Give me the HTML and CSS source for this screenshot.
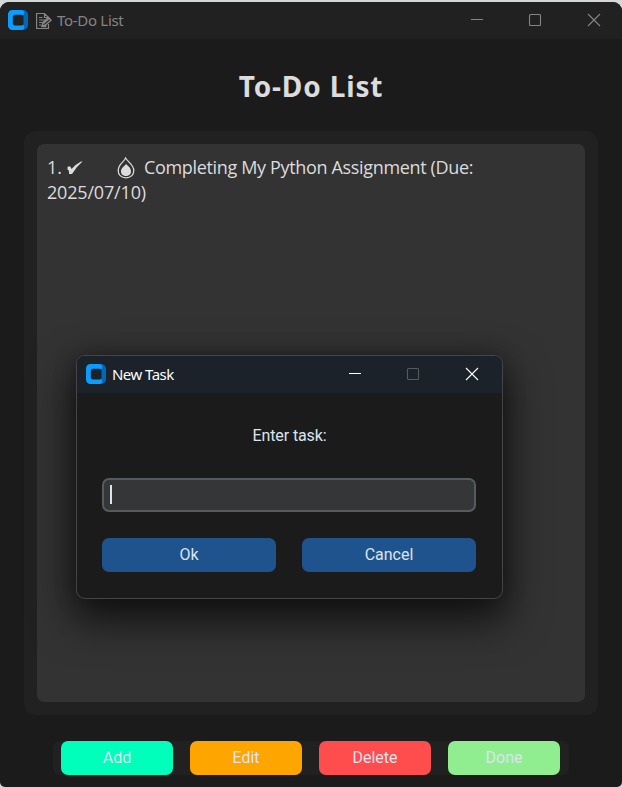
FILE: index.html
```html
<!DOCTYPE html>
<html lang="en">
<head>
<meta charset="utf-8">
<title>To-Do List</title>
<link rel="stylesheet" href="styles.css">
</head>
<body>
<main class="window">
  <header class="titlebar">
    <svg class="logo" viewBox="0 0 20 20"><rect width="20" height="20" rx="5" fill="#0067bd"/><path d="M5 0H14Q17 1 16 4L15 5V15L16 16Q17 19 14 20H5Q0 20 0 15V5Q0 0 5 0Z" fill="#0b9cff"/><rect class="logo-hole" x="4.800" y="4.800" width="10.700" height="10.700" rx="2"/></svg>
    <svg class="memo" viewBox="0 0 16 18" fill="none" stroke="#858585" stroke-width="1.2"><path d="M12.500 12V16.500H.6V1.500H8.500L12.500 5.500M8.500 1.500V5.500H12.500M3 5.500H6.500M3 8H9M3 10.500H6.500M3 13H5"/><path d="M6 14L7 10.500L12.500 5.500L15 8.200L9.500 13ZM7.500 11.500L13 6.800M5.500 14.500H10.500" stroke-width="1.400"/></svg>
    <span class="caption">To-Do List</span>
    <div class="controls">
      <svg viewBox="0 0 12 12"><path d="M0 5.500H12"/></svg>
      <svg viewBox="0 0 12 12"><rect x=".5" y=".5" width="11" height="11" rx="1"/></svg>
      <svg viewBox="0 0 12 12"><path d="M0 0L12 12M12 0L0 12"/></svg>
    </div>
  </header>
  <h1 class="heading">To-Do List</h1>
  <section class="panel">
    <div class="tasks">
      <div class="line"><span class="number">1.</span><svg class="check" viewBox="0 0 16 14"><path d="M.5 6Q3.500 4 4.500 8Q9 3 14 .5H15.500Q9 6 5 13H2Q2.500 9 .5 8.500Z" fill="#dcdcdc"/></svg><svg class="fire" viewBox="0 0 18 22"><path d="M8.500 1C8 4.500 1.200 6.500 1.200 13.500C1.200 18 4.500 20.800 9 20.800S16.800 18 16.800 13.500C16.800 8 11.500 5.500 8.500 1Z" fill="none" stroke="#d7d9dc" stroke-width="1.300"/><path d="M9 7C8.500 8.500 4 10.500 4 14.500C4 17.500 6.500 19 9 19S14 17.500 14 14.500C14 10.800 11 9 9 7Z" fill="#dcdcdc"/></svg><span class="text">Completing My Python Assignment (Due:</span></div>
      <div class="line"><span class="date">2025/07/10)</span></div>
    </div>
  </section>
  <nav class="actions">
    <button class="action add">Add</button>
    <button class="action edit">Edit</button>
    <button class="action delete">Delete</button>
    <button class="action done">Done</button>
  </nav>
</main>
<section class="dialog">
  <header class="titlebar dialog-bar">
    <svg class="logo" viewBox="0 0 20 20"><rect width="20" height="20" rx="5" fill="#0067bd"/><path d="M5 0H14Q17 1 16 4L15 5V15L16 16Q17 19 14 20H5Q0 20 0 15V5Q0 0 5 0Z" fill="#0b9cff"/><rect class="logo-hole" x="4.800" y="4.800" width="10.700" height="10.700" rx="2"/></svg>
    <span class="caption">New Task</span>
    <div class="controls">
      <svg viewBox="0 0 12 12"><path d="M0 5.500H12"/></svg>
      <svg class="disabled" viewBox="0 0 12 12"><rect x=".5" y=".5" width="11" height="11" rx="1"/></svg>
      <svg viewBox="0 0 12 12"><path d="M0 0L12 12M12 0L0 12"/></svg>
    </div>
  </header>
  <div class="prompt">Enter task:</div>
  <div class="entry"><span class="caret"></span></div>
  <div class="choices"><button class="choice">Ok</button><button class="choice">Cancel</button></div>
</section>
</body>
</html>
```
FILE: styles.css
```css
* { box-sizing: border-box; }
body { margin: 0; height: 787px; padding-top: 2px; background: #d5d8d8; overflow: hidden; position: relative; }
svg { display: block; flex: none; }
button { border: 0; padding: 0; border-radius: 7px; height: 34px; font: 16px/34px Roboto, sans-serif; color: #dce4ee; }
.window { height: 785px; border-radius: 9px 9px 5px 5px; background: #1b1b1b; overflow: hidden; }
.titlebar { display: flex; align-items: center; height: 37px; padding-left: 8px; background: #212121; color: #858585; }
.logo { width: 20px; height: 20px; margin-bottom: 1px; }
.logo-hole { fill: #212121; }
.memo { width: 16px; height: 18px; margin: 0 5px 0 8px; }
.caption { padding-bottom: 2px; font: 15px/20px "Noto Sans", sans-serif; letter-spacing: -.3px; white-space: nowrap; }
.controls { display: flex; gap: 46px; margin-left: auto; margin-right: 22px; padding-bottom: 1px; }
.controls svg { width: 12px; height: 12px; fill: none; stroke: currentColor; stroke-width: 1.100; overflow: visible; }
.controls svg:last-child { margin-left: 1px; }
.heading { margin: 27px 0 0; height: 40px; font: 700 28px/40px "Noto Sans", sans-serif; letter-spacing: .85px; color: #dcdcdc; text-align: center; }
.panel { width: 574px; height: 584px; margin: 25px 0 0 24px; padding: 13px; border-radius: 12px; background: #212121; }
.tasks { width: 548px; height: 558px; padding: 11px 10px; border-radius: 7px; background: #333; }
.line { display: flex; align-items: center; height: 25px; color: #dcdcdc; font: 18px/25px "Open Sans", sans-serif; white-space: nowrap; }
.number { width: 19px; }
.check { width: 16px; height: 14px; margin-left: 1px; }
.fire { width: 18px; height: 22px; margin: 0 9px 0 34px; }
.text { letter-spacing: -.34px; }
.date { letter-spacing: -.18px; }
.actions { display: flex; gap: 17px; width: 516px; height: 34px; margin: 26px 0 0 53px; padding: 0 8px; border-radius: 7px; background: #212121; }
.action { width: 112px; }
.add { background: #00ffbb; }
.edit { background: #ffa500; }
.delete { background: #ff4d4d; }
.done { background: #90ee90; }
.dialog { position: absolute; left: 76px; top: 355px; width: 427px; height: 244px; border: 1px solid #454545; border-radius: 9px; background: #1b1b1b; box-shadow: 0 18px 42px 4px rgba(0,0,0,.65), 0 0 22px rgba(0,0,0,.25); overflow: hidden; }
.dialog-bar { padding-left: 9px; background: #1b2229; color: #fff; }
.dialog-bar .logo { margin-right: 6px; }
.dialog-bar .caption { letter-spacing: -.55px; }
.dialog-bar .controls { margin-right: 24px; }
.dialog-bar .logo-hole { fill: #1b2229; }
.disabled { opacity: .26; }
.prompt { height: 28px; margin-top: 29px; text-align: center; font: 16px/28px Roboto, sans-serif; letter-spacing: -.1px; color: #dce4ee; }
.entry { width: 374px; height: 34px; margin: 28px 0 0 25px; padding: 5px 6px; border: 2px solid #565b5e; border-radius: 7px; background: #343638; }
.caret { display: block; width: 2px; height: 19px; background: #dce4ee; }
.choices { display: flex; gap: 26px; margin: 26px 0 0 25px; }
.choice { width: 174px; background: #1f538d; }
```
